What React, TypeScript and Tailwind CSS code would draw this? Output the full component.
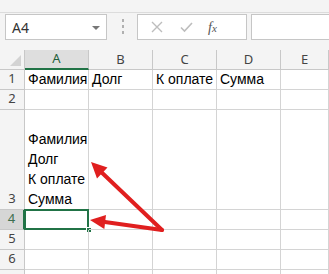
import React from 'react'

const cols = ['A', 'B', 'C', 'D', 'E']

type Row = { n: string; h: string; cells: string[][]; sel?: boolean }

const rows: Row[] = [
  { n: '1', h: 'h-[20px]', cells: [['Фамилия'], ['Долг'], ['К оплате'], ['Сумма'], []] },
  { n: '2', h: 'h-[20px]', cells: [[], [], [], [], []] },
  { n: '3', h: 'h-[100px]', cells: [['Фамилия', 'Долг', 'К оплате', 'Сумма'], [], [], [], []] },
  { n: '4', h: 'h-[20px]', cells: [[], [], [], [], []], sel: true },
  { n: '5', h: 'h-[20px]', cells: [[], [], [], [], []] },
  { n: '6', h: 'h-[20px]', cells: [[], [], [], [], []] },
  { n: '', h: 'h-[20px]', cells: [[], [], [], [], []] },
]

function Arrows() {
  return (
    <svg className="absolute left-0 top-0 pointer-events-none" width="329" height="274">
      <g stroke="#e01f1f" strokeWidth="4" strokeLinecap="round">
        <line x1="162" y1="230" x2="102" y2="172.7" />
        <line x1="162" y1="230" x2="104.9" y2="222" />
      </g>
      <g fill="#e01f1f">
        <polygon points="91,162 107.5,167.5 97,178.5" />
        <polygon points="90,220 106,215 104.3,229" />
      </g>
    </svg>
  )
}

export default function App() {
  return (
    <div className="relative w-[329px] h-[274px] overflow-hidden bg-white font-['Liberation_Sans',sans-serif]">
      {/* ribbon above, mostly scrolled out of view */}
      <div className="h-[13px] overflow-hidden border-b border-[#dcdcdc] bg-[#f4f4f4]" />

      {/* formula bar */}
      <div className="flex h-[37px] items-start bg-[#f4f4f4] pt-[1px] font-['Noto_Sans',sans-serif]">
        <div className="ml-[5px] flex h-[26px] w-[102px] items-center justify-between border border-[#c6c6c6] bg-white pl-[6px] pr-[6px] text-[14px] text-[#333]">
          <span>A4</span>
          <span className="mt-[1px] border-x-[4px] border-t-[4px] border-x-transparent border-t-[#777]" />
        </div>
        <div className="ml-[15px] mt-[5px] flex flex-col gap-[3px]">
          <span className="h-[3px] w-[2px] bg-[#b0b0b0]" />
          <span className="h-[3px] w-[2px] bg-[#b0b0b0]" />
          <span className="h-[3px] w-[2px] bg-[#b0b0b0]" />
        </div>
        <div className="ml-[13px] flex h-[26px] w-[110px] items-center border border-[#c6c6c6] bg-white">
          <svg width="12" height="12" className="ml-[13px]" viewBox="0 0 12 12">
            <path d="M1 1L11 11M11 1L1 11" stroke="#bdbdbd" strokeWidth="1.4" />
          </svg>
          <svg width="13" height="12" className="ml-[17px]" viewBox="0 0 13 12">
            <path d="M1 6.5L4.5 10L12 2" stroke="#bdbdbd" strokeWidth="1.6" fill="none" />
          </svg>
          <span className="ml-[15px] font-['Liberation_Serif',serif] text-[14px] italic text-[#555]">
            f<span className="text-[11px]">x</span>
          </span>
        </div>
        <div className="ml-[4px] h-[26px] flex-1 border border-r-0 border-[#c6c6c6] bg-white" />
      </div>

      {/* sheet */}
      <div className="grid grid-cols-[25px_64px_64px_64px_64px_1fr]">
        <div className="relative h-[20px] border-b border-r border-[#c8c8c8] bg-[#f4f4f4]">
          <span className="absolute bottom-[3px] right-[3px] border-b-[11px] border-l-[11px] border-b-[#d3d3d3] border-l-transparent" />
        </div>
        {cols.map((c) => (
          <div
            key={c}
            className={
              c === 'A'
                ? 'flex h-[20px] items-center justify-center border-b-2 border-r border-b-[#217346] border-r-[#c8c8c8] bg-[#dedede] font-["Noto_Sans",sans-serif] text-[13px] text-[#1e5e3b]'
                : 'flex h-[20px] items-center justify-center border-b border-r border-[#c8c8c8] bg-[#f4f4f4] font-["Noto_Sans",sans-serif] text-[13px] text-[#444]'
            }
          >
            {c}
          </div>
        ))}

        {rows.map((r, ri) => (
          <React.Fragment key={ri}>
            <div
              className={
                r.sel
                  ? `${r.h} flex items-end justify-center border-b border-r-2 border-b-[#c8c8c8] border-r-[#217346] bg-[#d6d6d6] pb-[1px] font-["Noto_Sans",sans-serif] text-[13px] text-[#3d6e50]`
                  : `${r.h} flex items-end justify-center border-b border-r border-[#c8c8c8] bg-[#f4f4f4] pb-[1px] font-["Noto_Sans",sans-serif] text-[13px] text-[#444]`
              }
            >
              {r.n}
            </div>
            {r.cells.map((lines, i) => (
              <div
                key={i}
                className={`${r.h} relative flex flex-col justify-end border-b border-r border-[#d4d4d4] pl-[3px] text-[14px] leading-[20px] text-black whitespace-nowrap`}
              >
                {lines.map((t) => (
                  <span key={t}>{t}</span>
                ))}
                {r.sel && i === 0 && (
                  <>
                    <span className="absolute -left-px -top-px h-[21px] w-[65px] border-2 border-[#217346]" />
                    <span className="absolute -bottom-[4px] -right-[4px] h-[6px] w-[6px] border border-white bg-[#217346]" />
                  </>
                )}
              </div>
            ))}
          </React.Fragment>
        ))}
      </div>

      <Arrows />
    </div>
  )
}
